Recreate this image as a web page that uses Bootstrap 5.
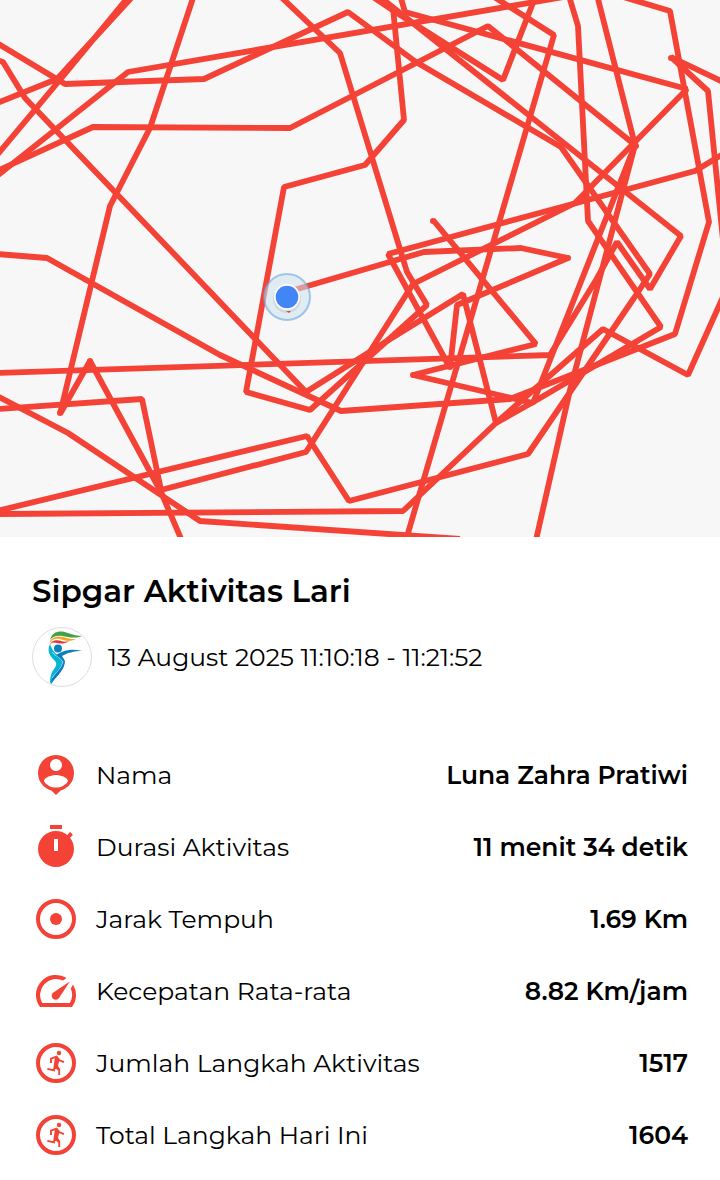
<!DOCTYPE html>
<html lang="id">
<head>
<meta charset="utf-8">
<meta name="viewport" content="width=device-width, initial-scale=1">
<title>Sipgar Aktivitas Lari</title>
<link href="https://cdn.jsdelivr.net/npm/bootstrap@5.3.0/dist/css/bootstrap.min.css" rel="stylesheet">
<style>
  body { font-family: Montserrat, Inter, "Open Sans", sans-serif; font-size: 25px; line-height: 32px; font-weight: 400; color: #000; background: #fff; }
  .route-map { background: #f7f7f7; }
  .details { padding: 36px 32px 8px; }
  .activity-title { font-size: 31px; line-height: 36px; font-weight: 600; }
  .club-logo { width: 60px; height: 60px; }
  .session { margin-top: 18px; margin-bottom: 52px; }
  .stat-row { padding: 12px 0; }
  .stat-icon { width: 48px; height: 48px; fill: #f44336; }
  .stat-value { font-weight: 600; }
</style>
</head>
<body>
<main>
  <svg class="route-map d-block w-100" viewBox="0 0 720 537" role="img" aria-label="Peta rute lari">
    <g fill="none" stroke="#f44336" stroke-width="5.8" stroke-linejoin="bevel">
      <path d="M-3 43L65 84L204 79L348 12L416 62L561 147L650 274L634 298L528 454L349 501L307 436L-3 511"/>
      <path d="M-3 103L57 79L134 -5M-3 155L59 81L130 -5"/>
      <path d="M-3 60L3 62L25 98L306 392L387 341L463 294L496 423L535 401L661 327L588 221L578 26L569 -4"/>
      <path d="M279 -5L340 53L407 272L427 305L310 410L246 392L284 187L365 165L404 120L393 8"/>
      <path d="M370 -5L394 11L503 80L536 -5"/>
      <path d="M380 -3L681 236L650 289L617 242L596 280L550 355L-3 373"/>
      <path d="M400 -5L405 12L687 89L575 203L413 284L306 452L161 490L142 399L-3 409"/>
      <path d="M-3 171L93 127L290 128L488 26L635 145L533 403L413 375L536 344L433 220"/>
      <path d="M597 -5L635 145L570 390L536 540"/>
      <path d="M-3 176L128 72L575 -5"/>
      <path d="M287 292L424 252L521 248L568 258L457 305L450 368L388 254L695 171L723 154"/>
      <path d="M620 -4L670 11L709 222L675 334L510 399L341 411L220 355L47 258L-3 254"/>
      <path d="M723 82L671 57L708 91L723 240M723 297L688 375L603 329L496 423L403 511L-3 514"/>
      <path d="M491 -5L554 35L406 540"/>
      <path d="M194 -5L150 128L110 206L60 414L90 361L161 492L182 541"/>
      <path d="M-3 396L68 433L200 521L460 539"/>
    </g>
    <g fill="#f44336"><circle cx="60" cy="413" r="3"/><circle cx="90" cy="361" r="3"/><circle cx="433" cy="221" r="3"/><circle cx="450" cy="367" r="3"/><circle cx="413" cy="375" r="3"/><circle cx="568" cy="258" r="3"/><circle cx="671" cy="58" r="3"/><circle cx="636" cy="146" r="3"/></g>
    <circle cx="287" cy="297" r="23" fill="#cde3f0" fill-opacity=".55" stroke="#6ba6dc" stroke-opacity=".6" stroke-width="2"/>
    <circle cx="287" cy="299" r="14" fill="#000" fill-opacity=".08"/>
    <path d="M286 311h5l-2 2z" fill="#d84b4b"/>
    <circle cx="287" cy="297" r="13" fill="#fff"/>
    <circle cx="287" cy="297" r="11.300" fill="#4285f4"/>
  </svg>

  <section class="details">
    <h1 class="activity-title mb-0">Sipgar Aktivitas Lari</h1>
    <div class="session d-flex align-items-center gap-3">
      <svg class="club-logo flex-shrink-0" viewBox="0 0 60 60" role="img" aria-label="Logo Sipgar">
        <circle cx="30" cy="30" r="29.500" fill="#fff" stroke="#dedede"/>
        <path d="M18 13C20 4 29 3 36 6C41 8 46 9 50 9C43 12 36 10 30 9C24 8 20 10 18 13z" fill="#43a047"/>
        <path d="M18 14C23 7 30 10 35 11C38 12 41 12 44 12C38 15 33 14 28 12C23 11 20 12 18 16z" fill="#f5a623"/>
        <path d="M18 18C20 12 26 13 29 14C32 15 34 15 37 14C33 17 29 17 25 16C21 15 20 15 18 18z" fill="#e53935"/>
        <circle cx="26" cy="21.500" r="4" fill="#0b7fc0"/>
        <path d="M18 17C15 23 17 28 22 33C25 36 25 38 22 42C19 46 18 50 18 57C20 53 22 51 25 47C31 41 33 36 29 31C25 28 20 24 18 17z" fill="#00b8d4"/>
        <path d="M23 29C29 24 39 21 50 24C42 24 35 26 30 29L33 34C33 42 25 48 19 57C20 48 29 43 31 35C29 32 26 31 23 29z" fill="#0b7fc0"/>
        <path d="M31 34C29 41 20 46 19 57C25 48 33 43 32 35z" fill="#0b7fc0"/>
        <path d="M20 25C23 29 29 31 31 35C29 42 23 46 20 51" fill="none" stroke="#fff" stroke-width=".6"/>
      </svg>
      <div>13 August 2025 11:10:18 - 11:21:52</div>
    </div>

    <ul class="list-unstyled mb-0">
      <li class="stat-row d-flex align-items-center gap-3">
        <svg class="stat-icon flex-shrink-0" viewBox="0 0 24 24" aria-hidden="true"><path d="M12 2c-4.970 0-9 4.030-9 9 0 4.170 2.840 7.670 6.690 8.690L12 22l2.310-2.310C18.160 18.670 21 15.170 21 11c0-4.970-4.030-9-9-9zm0 2c1.660 0 3 1.340 3 3s-1.340 3-3 3-3-1.340-3-3 1.340-3 3-3zm0 14.300c-2.500 0-4.710-1.280-6-3.220.03-1.990 4-3.080 6-3.080 1.990 0 5.970 1.090 6 3.080-1.290 1.940-3.500 3.220-6 3.220z"/></svg>
        <span class="flex-grow-1">Nama</span><span class="stat-value text-end">Luna Zahra Pratiwi</span>
      </li>
      <li class="stat-row d-flex align-items-center gap-3">
        <svg class="stat-icon flex-shrink-0" viewBox="0 0 24 24" aria-hidden="true"><path fill-rule="evenodd" d="M15 1H9v2h6V1zm-4 13h2V8h-2v6zm8.030-6.610l1.420-1.420c-.43-.51-.9-.99-1.410-1.410l-1.420 1.420C16.070 4.740 14.120 4 12 4c-4.970 0-9 4.030-9 9s4.020 9 9 9 9-4.030 9-9c0-2.120-.74-4.070-1.970-5.610z"/></svg>
        <span class="flex-grow-1">Durasi Aktivitas</span><span class="stat-value text-end">11 menit 34 detik</span>
      </li>
      <li class="stat-row d-flex align-items-center gap-3">
        <svg class="stat-icon flex-shrink-0" viewBox="0 0 24 24" aria-hidden="true"><circle cx="12" cy="12" r="9" fill="none" stroke="#f44336" stroke-width="2"/><circle cx="12" cy="12" r="3"/></svg>
        <span class="flex-grow-1">Jarak Tempuh</span><span class="stat-value text-end">1.69 Km</span>
      </li>
      <li class="stat-row d-flex align-items-center gap-3">
        <svg class="stat-icon flex-shrink-0" viewBox="0 0 24 24" aria-hidden="true"><path d="M17.300 5.500A10 10 0 0 0 4 20H20A10 10 0 0 0 20.500 8.700L19.400 10.800A8 8 0 0 1 18.900 18H5.100A8 8 0 0 1 15.500 6.800z"/><path d="M18.900 7.200L10.500 12.900A2 2 0 1 0 13.500 15.500z"/></svg>
        <span class="flex-grow-1">Kecepatan Rata-rata</span><span class="stat-value text-end">8.82 Km/jam</span>
      </li>
      <li class="stat-row d-flex align-items-center gap-3">
        <svg class="stat-icon flex-shrink-0" viewBox="0 0 48 48" aria-hidden="true"><g id="runner"><circle cx="24" cy="24" r="18" fill="none" stroke="#f44336" stroke-width="4"/><circle cx="27" cy="14" r="2.200"/><path fill="none" stroke="#f44336" stroke-width="1.900" d="M19 24V19.700L24.500 17.700L27.500 21.300L32 23.200M24 18L22 31.300L15.300 29.900M26.500 20L25 27L27.200 30.500V36M23 27.500L27 31"/><path d="M23.500 18L26.800 20L25.500 27.500L22.500 28z"/></g></svg>
        <span class="flex-grow-1">Jumlah Langkah Aktivitas</span><span class="stat-value text-end">1517</span>
      </li>
      <li class="stat-row d-flex align-items-center gap-3">
        <svg class="stat-icon flex-shrink-0" viewBox="0 0 48 48" aria-hidden="true"><use href="#runner"/></svg>
        <span class="flex-grow-1">Total Langkah Hari Ini</span><span class="stat-value text-end">1604</span>
      </li>
    </ul>
  </section>
</main>
<script src="https://cdn.jsdelivr.net/npm/bootstrap@5.3.0/dist/js/bootstrap.bundle.min.js"></script>
</body>
</html>
